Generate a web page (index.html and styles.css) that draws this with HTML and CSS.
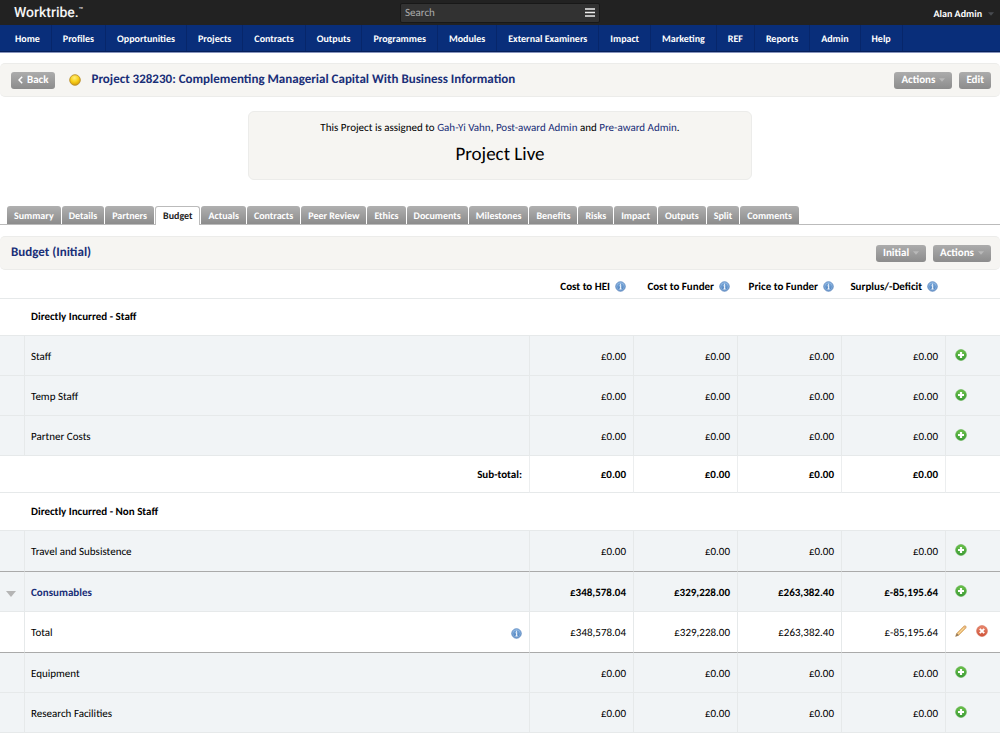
FILE: index.html
```html
<!DOCTYPE html>
<html lang="en">
<head>
<meta charset="utf-8">
<meta name="viewport" content="width=device-width, initial-scale=1">
<title>Project 328230 - Worktribe</title>
<link rel="stylesheet" href="styles.css">
</head>
<body>
<svg class="sprite" aria-hidden="true">
  <defs>
    <linearGradient id="g-add" x1="0" y1="0" x2="0" y2="1"><stop offset="0" stop-color="#6cc24a"/><stop offset="1" stop-color="#3a9a35"/></linearGradient>
    <linearGradient id="g-info" x1="0" y1="0" x2="0" y2="1"><stop offset="0" stop-color="#7fadde"/><stop offset="1" stop-color="#4a7dbb"/></linearGradient>
    <linearGradient id="g-del" x1="0" y1="0" x2="0" y2="1"><stop offset="0" stop-color="#ea8a70"/><stop offset="1" stop-color="#cf5238"/></linearGradient>
    <radialGradient id="g-lamp" cx="0.45" cy="0.3" r="0.7"><stop offset="0" stop-color="#ffee7a"/><stop offset="0.55" stop-color="#f8cf18"/><stop offset="1" stop-color="#d39a08"/></radialGradient>
    <symbol id="i-add" viewBox="0 0 12 12"><circle cx="6" cy="6" r="5.4" fill="url(#g-add)" stroke="#57ab45" stroke-width=".6"/><path d="M6 3v6M3 6h6" stroke="#fff" stroke-width="2.2"/></symbol>
    <symbol id="i-info" viewBox="0 0 12 12"><circle cx="6" cy="6" r="5.2" fill="url(#g-info)" stroke="#4d7cb8" stroke-width=".8"/><circle cx="6" cy="6" r="4.2" fill="none" stroke="#b5d0ee" stroke-width=".5"/><path d="M6 2.9v1.3M5 5.2h1.2v3.6M4.8 8.8h2.4" stroke="#fff" stroke-width="1.1" fill="none"/></symbol>
    <symbol id="i-del" viewBox="0 0 12 12"><circle cx="6" cy="6" r="5.4" fill="url(#g-del)" stroke="#d2644c" stroke-width=".6"/><path d="M3.8 3.8l4.4 4.4M8.2 3.8L3.8 8.2" stroke="#fff" stroke-width="1.9"/></symbol>
    <symbol id="i-edit" viewBox="0 0 12 12"><path d="M.6 11.4l1.2-3.2L8.9 1.1q1-.8 1.9 0t.1 2L3.8 10.200z" fill="#ecbb70" stroke="#c99a5c" stroke-width=".6"/><path d="M2.800 9.200l7-7" stroke="#f9dda6" stroke-width=".9"/><path d="M.6 11.4l1.200-3.200 2 2z" fill="#8b7661"/><path d="M8.600 1.400l2 2" stroke="#dfa59a" stroke-width=".9"/></symbol>
    <symbol id="i-down" viewBox="0 0 10 6"><path d="M0 0h10L5 6z" fill="currentColor"/></symbol>
  </defs>
</svg>

<header class="topbar">
  <a class="logo" href="#">Worktribe.<sup>™</sup></a>
  <form class="search" role="search">
    <input type="text" placeholder="Search" aria-label="Search">
    <button type="button" aria-label="Search options"><svg viewBox="0 0 10 9"><path d="M0 1h10M0 4.500h10M0 8h10" stroke="#eee" stroke-width="1.500"/></svg></button>
  </form>
  <button class="user" type="button">Alan Admin <svg class="caret"><use href="#i-down"/></svg></button>
</header>

<nav class="mainnav" aria-label="Main">
  <a href="#">Home</a><a href="#">Profiles</a><a href="#">Opportunities</a><a href="#">Projects</a><a href="#">Contracts</a><a href="#">Outputs</a><a href="#">Programmes</a><a href="#">Modules</a><a href="#">External Examiners</a><a href="#">Impact</a><a href="#">Marketing</a><a href="#">REF</a><a href="#">Reports</a><a href="#">Admin</a><a href="#">Help</a>
</nav>

<main>
  <section class="bar">
    <button class="btn" type="button"><svg class="chev" viewBox="0 0 5 8"><path d="M4.200.8L1 4l3.200 3.200" fill="none" stroke="#fff" stroke-width="1.500"/></svg>Back</button>
    <svg class="lamp" viewBox="0 0 12 12" role="img" aria-label="Status: amber"><circle cx="6" cy="6" r="5.300" fill="url(#g-lamp)" stroke="#b98f2c" stroke-width=".9"/></svg>
    <h1>Project 328230: Complementing Managerial Capital With Business Information</h1>
    <div class="actions">
      <button class="btn" type="button">Actions<svg class="caret"><use href="#i-down"/></svg></button>
      <button class="btn" type="button">Edit</button>
    </div>
  </section>

  <section class="status">
    <p>This Project is assigned to <a href="#">Gah-Yi Vahn</a>, <a href="#">Post-award Admin</a> and <a href="#">Pre-award Admin</a>.</p>
    <h2>Project Live</h2>
  </section>

  <nav class="tabs" aria-label="Project">
    <a href="#">Summary</a><a href="#">Details</a><a href="#">Partners</a><a href="#" class="current" aria-current="page">Budget</a><a href="#">Actuals</a><a href="#">Contracts</a><a href="#">Peer Review</a><a href="#">Ethics</a><a href="#">Documents</a><a href="#">Milestones</a><a href="#">Benefits</a><a href="#">Risks</a><a href="#">Impact</a><a href="#">Outputs</a><a href="#">Split</a><a href="#">Comments</a>
  </nav>

  <section class="bar">
    <h2 class="bar-title">Budget (Initial)</h2>
    <div class="actions">
      <button class="btn" type="button">Initial<svg class="caret"><use href="#i-down"/></svg></button>
      <button class="btn" type="button">Actions<svg class="caret"><use href="#i-down"/></svg></button>
    </div>
  </section>

  <table class="budget">
    <colgroup><col class="c-toggle"><col><col class="c-money"><col class="c-money"><col class="c-money"><col class="c-money"><col class="c-tools"></colgroup>
    <thead>
      <tr><td></td><td></td>
        <th scope="col">Cost to HEI<button class="icon" type="button" aria-label="About Cost to HEI"><svg><use href="#i-info"/></svg></button></th>
        <th scope="col">Cost to Funder<button class="icon" type="button" aria-label="About Cost to Funder"><svg><use href="#i-info"/></svg></button></th>
        <th scope="col">Price to Funder<button class="icon" type="button" aria-label="About Price to Funder"><svg><use href="#i-info"/></svg></button></th>
        <th scope="col">Surplus/-Deficit<button class="icon" type="button" aria-label="About Surplus/-Deficit"><svg><use href="#i-info"/></svg></button></th>
        <td></td></tr>
    </thead>
    <tbody>
      <tr class="group"><td></td><th scope="rowgroup" colspan="6">Directly Incurred - Staff</th></tr>
      <tr class="line"><td></td><th scope="row">Staff</th><td>£0.00</td><td>£0.00</td><td>£0.00</td><td>£0.00</td><td class="tools"><div><button class="icon" type="button" aria-label="Add Staff"><svg><use href="#i-add"/></svg></button></div></td></tr>
      <tr class="line"><td></td><th scope="row">Temp Staff</th><td>£0.00</td><td>£0.00</td><td>£0.00</td><td>£0.00</td><td class="tools"><div><button class="icon" type="button" aria-label="Add Temp Staff"><svg><use href="#i-add"/></svg></button></div></td></tr>
      <tr class="line"><td></td><th scope="row">Partner Costs</th><td>£0.00</td><td>£0.00</td><td>£0.00</td><td>£0.00</td><td class="tools"><div><button class="icon" type="button" aria-label="Add Partner Costs"><svg><use href="#i-add"/></svg></button></div></td></tr>
      <tr class="subtotal"><th scope="row" colspan="2">Sub-total:</th><td>£0.00</td><td>£0.00</td><td>£0.00</td><td>£0.00</td><td></td></tr>
    </tbody>
    <tbody>
      <tr class="group"><td></td><th scope="rowgroup" colspan="6">Directly Incurred - Non Staff</th></tr>
      <tr class="line rule"><td></td><th scope="row">Travel and Subsistence</th><td>£0.00</td><td>£0.00</td><td>£0.00</td><td>£0.00</td><td class="tools"><div><button class="icon" type="button" aria-label="Add Travel and Subsistence"><svg><use href="#i-add"/></svg></button></div></td></tr>
      <tr class="line open"><td class="toggle"><button class="icon" type="button" aria-label="Collapse Consumables" aria-expanded="true"><svg><use href="#i-down"/></svg></button></td><th scope="row"><a href="#">Consumables</a></th><td>£348,578.04</td><td>£329,228.00</td><td>£263,382.40</td><td>£-85,195.64</td><td class="tools"><div><button class="icon" type="button" aria-label="Add Consumables"><svg><use href="#i-add"/></svg></button></div></td></tr>
      <tr class="line detail rule"><td></td><th scope="row"><div class="label">Total<button class="icon" type="button" aria-label="About Total"><svg><use href="#i-info"/></svg></button></div></th><td>£348,578.04</td><td>£329,228.00</td><td>£263,382.40</td><td>£-85,195.64</td><td class="tools"><div><button class="icon" type="button" aria-label="Edit Total"><svg><use href="#i-edit"/></svg></button><button class="icon" type="button" aria-label="Delete Total"><svg><use href="#i-del"/></svg></button></div></td></tr>
      <tr class="line"><td></td><th scope="row">Equipment</th><td>£0.00</td><td>£0.00</td><td>£0.00</td><td>£0.00</td><td class="tools"><div><button class="icon" type="button" aria-label="Add Equipment"><svg><use href="#i-add"/></svg></button></div></td></tr>
      <tr class="line"><td></td><th scope="row">Research Facilities</th><td>£0.00</td><td>£0.00</td><td>£0.00</td><td>£0.00</td><td class="tools"><div><button class="icon" type="button" aria-label="Add Research Facilities"><svg><use href="#i-add"/></svg></button></div></td></tr>
    </tbody>
  </table>
</main>
</body>
</html>
```
FILE: styles.css
```css
* { box-sizing: border-box; }

body {
  margin: 0;
  background: #fff;
  color: #000;
  font: 11px/16px Carlito, Lato, "Liberation Sans", sans-serif;
  text-rendering: geometricPrecision;
}

a { color: #1a2f78; text-decoration: none; }
button, input { font: inherit; color: inherit; text-rendering: inherit; }
button { cursor: pointer; }
h1, h2, p { margin: 0; }
.sprite { position: absolute; width: 0; height: 0; }

/* Top bar */
.topbar {
  display: grid;
  grid-template-columns: 1fr 200px 1fr;
  align-items: center;
  height: 25px;
  padding: 0 6px;
  background: #222;
  color: #fff;
}
.logo {
  padding-left: 8px;
  color: #f4f4f4;
  font: 500 14px/24px Roboto, sans-serif;
}
.logo sup { font-size: 7px; line-height: 7px; vertical-align: 5px; }
.search {
  display: flex;
  align-items: center;
  height: 20px;
  padding: 0 4px;
  background: #323232;
  border: 1px solid #181818;
  border-radius: 2px;
}
.search input {
  flex: 1;
  min-width: 0;
  padding: 0;
  border: 0;
  outline: 0;
  background: none;
}
.search input::placeholder { color: #aaa; opacity: 1; }
.search button { display: flex; padding: 0; border: 0; background: none; }
.search button svg { width: 10px; height: 9px; }
.user {
  display: flex;
  align-items: center;
  justify-self: end;
  gap: 6px;
  padding: 2px 0 0;
  border: 0;
  background: none;
  font-size: 10px;
  font-weight: 700;
}
.user .caret { color: #484b50; }
.caret { width: 6px; height: 4px; }

/* Main navigation */
.mainnav {
  display: flex;
  padding-left: 4px;
  background: #092e7a;
  border-bottom: 1px solid #061f5a;
  box-shadow: 0 1px 0 #8794bd;
}
.mainnav a {
  padding: 6px 11px 4px;
  border-right: 1px solid #07266a;
  color: #fff;
  font-size: 10px;
  font-weight: 700;
  white-space: nowrap;
}

/* Title bars */
.bar {
  display: flex;
  align-items: center;
  min-height: 34px;
  padding: 0 9px 0 11px;
  background: #f6f5f2;
  border: 1px solid #ececea;
  border-width: 1px 0;
  border-radius: 5px;
}
.mainnav + main { padding-top: 11px; }
.bar h1, .bar-title { color: #1a2f78; font-size: 13px; font-weight: 700; }
.lamp { width: 12px; height: 12px; margin: 0 10px 0 14px; }
.actions { display: flex; gap: 7px; margin-left: auto; }
.btn {
  display: flex;
  align-items: center;
  gap: 4px;
  height: 17px;
  padding: 0 7px;
  border: 0;
  border-radius: 3px;
  background: linear-gradient(#acacac, #8c8c8c);
  color: #fff;
  font-weight: 700;
}
.btn .caret { color: #b9b9b9; }
.btn .chev { width: 5px; height: 8px; }

/* Assignment panel */
.status {
  width: 50.4%;
  margin: 14px auto 26px;
  padding: 8px 8px 12px;
  background: #f6f5f2;
  border: 1px solid #ececea;
  border-radius: 6px;
  text-align: center;
}
.status h2 { margin-top: 7px; font-size: 19px; line-height: 24px; font-weight: 400; }

/* Tabs */
.tabs {
  display: flex;
  gap: 1px;
  margin-bottom: 11px;
  padding-left: 7px;
  border-bottom: 1px solid #bbb;
}
.tabs a {
  padding: 2px 7px 0;
  border-radius: 3px 3px 0 0;
  background: linear-gradient(#b0b0b0, #8c8c8c);
  color: #fff;
  font-size: 10px;
  font-weight: 700;
}
.tabs .current {
  margin-bottom: -1px;
  padding-top: 1px;
  border: 1px solid #bbb;
  border-bottom: 0;
  background: #fff;
  color: #222;
}

/* Budget table */
.budget {
  width: 100%;
  border-spacing: 0;
  table-layout: fixed;
}
.c-toggle { width: 25px; }
.c-money { width: 104px; }
.c-tools { width: 54px; }
.budget th, .budget td {
  padding: 2px 7px 0;
  border-bottom: 1px solid #e6e9ea;
  font-weight: 400;
  text-align: right;
  white-space: nowrap;
}
.budget thead th { padding: 6px 8px 0 0; font-weight: 700; }
.budget thead tr { height: 29px; }
.icon {
  display: inline-flex;
  padding: 0;
  border: 0;
  background: none;
  vertical-align: -2px;
}
.icon svg { width: 11px; height: 11px; }
thead .icon { margin-left: 5px; }
.group { height: 37px; }
tbody + tbody .group { height: 38px; }
.budget .group th { padding: 0 6px; font-weight: 700; text-align: left; }
.line { height: 40px; background: #f1f4f6; }
.budget .line td, .budget .line th { border-right: 1px solid #e6e9ea; }
.budget .line th { padding-left: 6px; text-align: left; }
.budget .line td:last-child { border-right: 0; }
.subtotal { height: 37px; }
.budget .subtotal th, .budget .subtotal td { font-weight: 700; border-right: 1px solid #eceeef; }
.budget .subtotal td:last-child { border-right: 0; }
.budget .rule td, .budget .rule th { border-bottom: 1px solid #aaa; }
.rule { height: 41px; }
.open th a, .budget .open td, .budget .open th { font-weight: 700; }
.detail { background: #fff; }
.label { display: flex; align-items: center; justify-content: space-between; }
.tools div { display: flex; gap: 9px; padding-bottom: 2px; }
.budget .tools { padding: 0 0 0 9px; }
.tools .icon svg { width: 12px; height: 12px; }
.budget .toggle { padding: 0 0 0 6px; text-align: left; }
.toggle svg { width: 10px; height: 6px; color: #b5b5b5; }
```
